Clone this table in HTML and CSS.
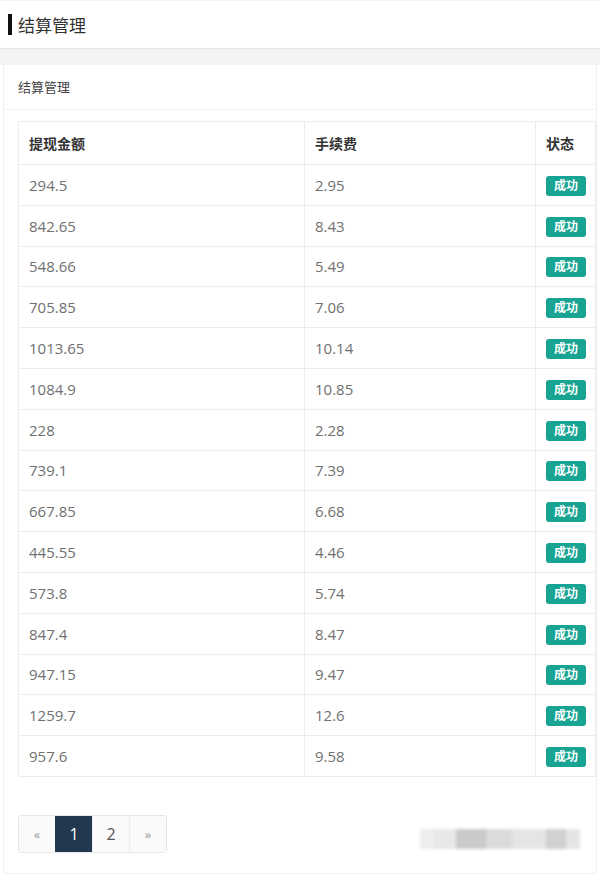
FILE: index.html
```html
<!DOCTYPE html>
<html lang="zh-CN">
<head>
  <meta charset="UTF-8" />
  <meta name="viewport" content="width=device-width, initial-scale=1.0"/>
  <title>结算管理</title>
  <link rel="stylesheet" href="styles.css">
</head>
<body>

  <div class="top-bar">
    <span class="mark"></span>
    <h2>结算管理</h2>
  </div>
  <div class="band"></div>

  <div class="card">
    <div class="card-head">结算管理</div>
    <div class="card-body">
      <table class="list">
        <thead>
          <tr><th class="c1">提现金额</th><th class="c2">手续费</th><th class="c3">状态</th></tr>
        </thead>
        <tbody id="rows"></tbody>
      </table>

      <div class="foot">
        <div class="pager">
          <a href="#">&laquo;</a>
          <a href="#" class="on">1</a>
          <a href="#">2</a>
          <a href="#">&raquo;</a>
        </div>
        <div class="blur">
          <i style="width:14px;opacity:.25"></i>
          <i style="width:22px;opacity:.35"></i>
          <i style="width:30px;opacity:.8"></i>
          <i style="width:26px;opacity:.55"></i>
          <i style="width:34px;opacity:.4"></i>
          <i style="width:20px;opacity:.7"></i>
          <i style="width:14px;opacity:.4"></i>
        </div>
      </div>
    </div>
  </div>

  <script>
    const data = [
      ["294.5", "2.95"], ["842.65", "8.43"], ["548.66", "5.49"], ["705.85", "7.06"],
      ["1013.65", "10.14"], ["1084.9", "10.85"], ["228", "2.28"], ["739.1", "7.39"],
      ["667.85", "6.68"], ["445.55", "4.46"], ["573.8", "5.74"], ["847.4", "8.47"],
      ["947.15", "9.47"], ["1259.7", "12.6"], ["957.6", "9.58"]
    ];
    const tbody = document.getElementById("rows");
    data.forEach(row => {
      const tr = document.createElement("tr");
      tr.innerHTML = "<td>" + row[0] + "</td><td>" + row[1] + "</td><td><span class=\"badge\">成功</span></td>";
      tbody.appendChild(tr);
    });
  </script>

</body>
</html>
```

FILE: styles.css
```css
body {
  margin: 0;
  background: #fff;
  font-family: "Open Sans", "Noto Sans CJK SC", sans-serif;
  color: #707070;
}
.top-bar {
  height: 48px;
  display: flex;
  align-items: center;
  padding-left: 8px;
  border-top: 1px solid #f3f3f3;
  box-sizing: border-box;
}
.mark {
  width: 4px;
  height: 21px;
  background: #111;
  margin-right: 6px;
}
.top-bar h2 {
  margin: 0;
  font-size: 17px;
  font-weight: normal;
  color: #333;
}
.band {
  height: 17px;
  background: #f2f3f5;
  border-top: 1px solid #e6e6e6;
  box-sizing: border-box;
}
.card {
  margin: 0 3px 0 3px;
  border: 1px solid #f0f0f0;
  border-top: none;
}
.card-head {
  height: 44px;
  line-height: 44px;
  padding-left: 14px;
  font-size: 13px;
  color: #444;
  border-bottom: 1px solid #f0f0f0;
}
.card-body {
  padding: 11px 0 20px 14px;
}
.list {
  width: 100%;
  border-collapse: collapse;
  font-size: 15px;
}
.list th, .list td {
  border: 1px solid #ececec;
  text-align: left;
  padding: 0 10px;
  white-space: nowrap;
}
.list th {
  height: 42px;
  font-size: 14px;
  font-weight: bold;
  color: #333;
}
.list td {
  height: 39.8px;
}
.list .c1 { width: 265px; }
.list .c2 { width: 210px; }
.list td:last-child {
  padding-right: 4px;
}
.badge {
  display: inline-block;
  background: #17a493;
  color: #fff;
  font-size: 12px;
  font-weight: bold;
  line-height: 20px;
  padding: 0 8px;
  border-radius: 3px;
  vertical-align: middle;
}
.foot {
  margin-top: 38px;
  display: flex;
  align-items: center;
  justify-content: space-between;
  padding-right: 16px;
}
.pager {
  display: flex;
  border: 1px solid #e6e6e6;
  border-radius: 3px;
}
.pager a {
  width: 36px;
  height: 36px;
  line-height: 36px;
  text-align: center;
  text-decoration: none;
  color: #555;
  font-size: 16px;
  background: #fafafa;
  border-left: 1px solid #ececec;
}
.pager a:first-child {
  border-left: none;
  font-size: 13px;
  color: #999;
}
.pager a:last-child {
  font-size: 13px;
  color: #999;
}
.pager a.on {
  background: #22384f;
  color: #fff;
  border-left-color: #22384f;
}
.blur {
  display: flex;
  height: 20px;
  margin-top: 10px;
  filter: blur(1.5px);
}
.blur i {
  display: block;
  height: 20px;
  background: #bdbdbd;
}
```
